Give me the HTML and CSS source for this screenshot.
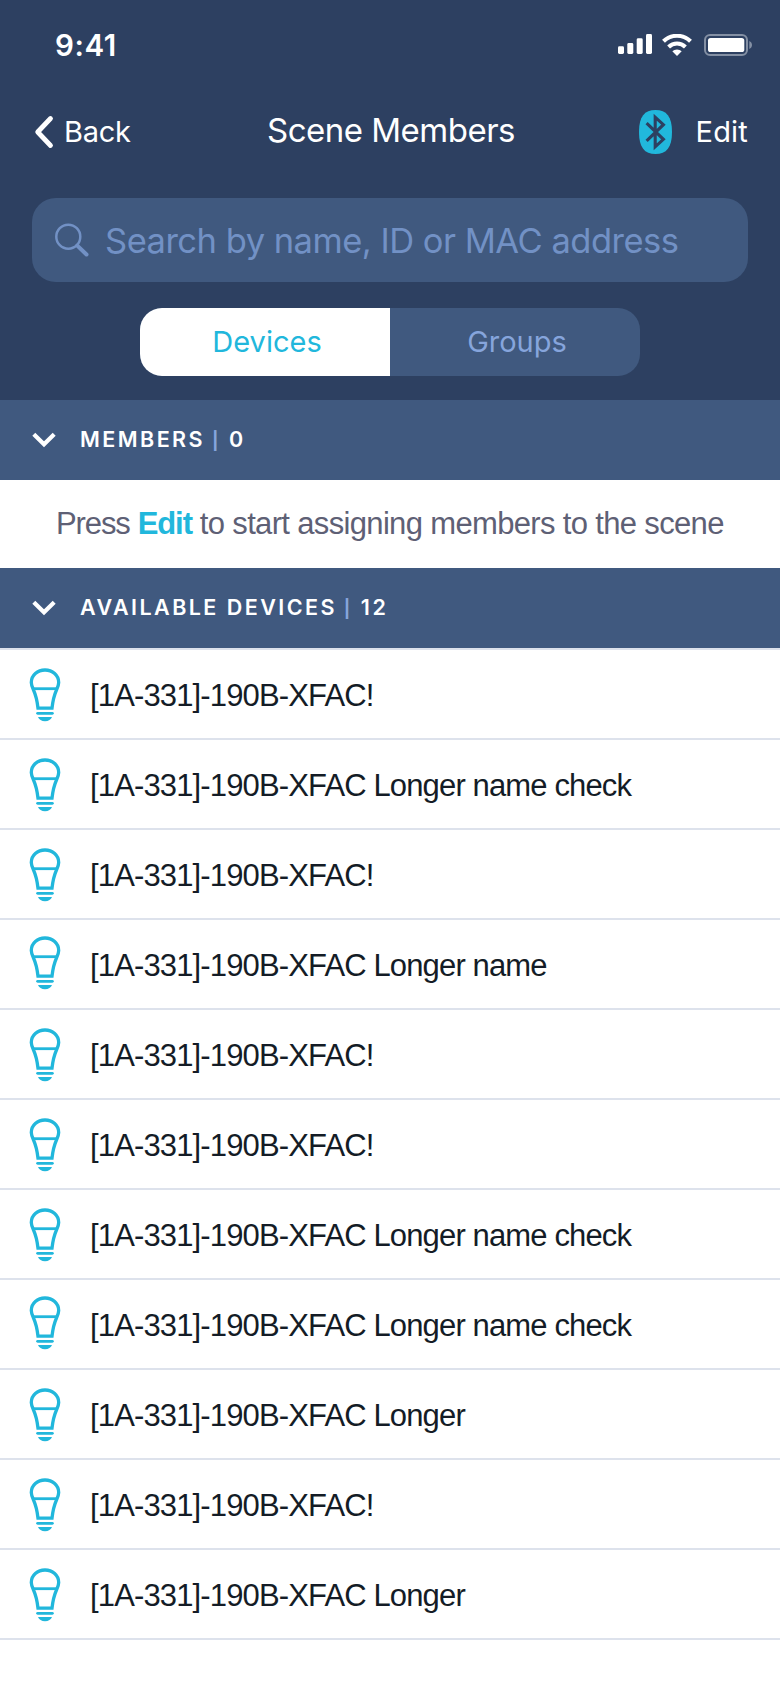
FILE: index.html
```html
<!DOCTYPE html>
<html lang="en">
<head>
<meta charset="utf-8">
<title>Scene Members</title>
<link rel="stylesheet" href="styles.css">
</head>
<body>
<svg class="defs" width="0" height="0" aria-hidden="true">
  <symbol id="bulb" viewBox="0 0 32 54">
    <path d="M9 40.200C8.200 33 7 27.500 4.500 22 3 18.800 2.300 17 2.300 14.400 2.300 7.300 8.500 2 16 2S29.700 7.300 29.700 14.400C29.700 17 29 18.800 27.500 22 25 27.500 23.800 33 23 40.200Z" fill="none" stroke="currentColor" stroke-width="3.300"/>
    <path d="M4 20.700H28" stroke="currentColor" stroke-width="2.800"/>
    <path d="M8.600 45.300H23.400" stroke="currentColor" stroke-width="2.800" stroke-linecap="round"/>
    <path d="M9 49H23C22 51.600 19.500 53.200 16 53.200S10 51.600 9 49Z" fill="currentColor"/>
  </symbol>
  <symbol id="down" viewBox="0 0 24 16">
    <path d="M1.800 2.300L12 12.300 22.200 2.300" fill="none" stroke="currentColor" stroke-width="4.200"/>
  </symbol>
</svg>
<header class="header">
  <div class="status">
    <span class="time">9:41</span>
    <span class="signals">
      <svg width="34" height="22" viewBox="0 0 34 22" fill="#fff"><rect x="0" y="12.300" width="6" height="7.700" rx="1.400"/><rect x="9.300" y="9" width="6" height="11" rx="1.400"/><rect x="18.700" y="4.300" width="6" height="15.700" rx="1.400"/><rect x="28" y="0" width="6" height="20" rx="1.400"/></svg>
      <svg width="30" height="22" viewBox="0 0 30 22"><g fill="none" stroke="#fff" stroke-width="4.100"><path d="M1.500 7.300A19.300 19.300 0 0 1 28.500 7.300"/><path d="M6.600 12.900A12.200 12.200 0 0 1 23.400 12.900"/></g><path d="M15 22L10.300 17.300A6.800 6.800 0 0 1 19.700 17.300Z" fill="#fff"/></svg>
      <svg width="48" height="22" viewBox="0 0 48 22"><rect x="1" y="1" width="42" height="20" rx="5" fill="none" stroke="#8490a4" stroke-width="2"/><rect x="4" y="4" width="36.300" height="14" rx="2.600" fill="#fff"/><path d="M45.300 7V15C46.900 14.300 48 12.800 48 11S46.900 7.700 45.300 7Z" fill="#8490a4"/></svg>
    </span>
  </div>
  <nav class="nav">
    <a class="back"><svg width="20" height="34" viewBox="0 0 20 34"><path d="M16.500 3.500L3.700 17 16.500 30.500" fill="none" stroke="#fff" stroke-width="4.800" stroke-linecap="round" stroke-linejoin="round"/></svg><span class="label">Back</span></a>
    <h1 class="title">Scene Members</h1>
    <div class="actions">
      <svg width="33" height="44" viewBox="0 0 33 44"><path d="M16.500 0C27.500 0 33 6.500 33 22S27.500 44 16.500 44 0 37.500 0 22 5.500 0 16.500 0Z" fill="#21b8dc"/><path d="M7.600 13.200L24.400 29.300 16.200 36.800V7.200L24.400 14.700 7.600 30.800" fill="none" stroke="#2d4061" stroke-width="3.100"/></svg>
      <a class="edit label">Edit</a>
    </div>
  </nav>
  <div class="search">
    <svg width="36" height="36" viewBox="0 0 36 36" fill="none" stroke="currentColor"><circle cx="14.300" cy="14.700" r="12" stroke-width="2.500"/><path d="M23.300 23.600L32.500 32.500" stroke-width="4" stroke-linecap="round"/></svg>
    <span>Search by name, ID or MAC address</span>
  </div>
  <div class="tabs"><span class="tab active">Devices</span><span class="tab">Groups</span></div>
</header>
<main>
  <h2 class="section"><svg width="24" height="16"><use href="#down"/></svg><span>MEMBERS</span><i class="sep">|</i><span>0</span></h2>
  <p class="hint"><span class="lead">Press</span> <b>Edit</b> to start assigning members to the scene</p>
  <h2 class="section"><svg width="24" height="16"><use href="#down"/></svg><span>AVAILABLE DEVICES</span><i class="sep">|</i><span>12</span></h2>
  <ul class="list">
    <li class="row"><svg class="bulb"><use href="#bulb"/></svg><span>[1A-331]-190B-XFAC!</span></li>
    <li class="row"><svg class="bulb"><use href="#bulb"/></svg><span>[1A-331]-190B-XFAC Longer name check</span></li>
    <li class="row"><svg class="bulb"><use href="#bulb"/></svg><span>[1A-331]-190B-XFAC!</span></li>
    <li class="row"><svg class="bulb raised"><use href="#bulb"/></svg><span>[1A-331]-190B-XFAC Longer name</span></li>
    <li class="row"><svg class="bulb"><use href="#bulb"/></svg><span>[1A-331]-190B-XFAC!</span></li>
    <li class="row"><svg class="bulb"><use href="#bulb"/></svg><span>[1A-331]-190B-XFAC!</span></li>
    <li class="row"><svg class="bulb"><use href="#bulb"/></svg><span>[1A-331]-190B-XFAC Longer name check</span></li>
    <li class="row"><svg class="bulb raised"><use href="#bulb"/></svg><span>[1A-331]-190B-XFAC Longer name check</span></li>
    <li class="row"><svg class="bulb"><use href="#bulb"/></svg><span>[1A-331]-190B-XFAC Longer</span></li>
    <li class="row"><svg class="bulb"><use href="#bulb"/></svg><span>[1A-331]-190B-XFAC!</span></li>
    <li class="row"><svg class="bulb"><use href="#bulb"/></svg><span>[1A-331]-190B-XFAC Longer</span></li>
  </ul>
</main>
</body>
</html>
```
FILE: styles.css
```css
* { box-sizing: border-box; margin: 0; padding: 0; }
html, body { background: #fff; }
body { width: 780px; height: 1688px; overflow: hidden; font-family: Inter, sans-serif; color: #fff; }
svg { display: block; flex: none; }
.defs { width: 0; height: 0; float: left; }

.header { height: 400px; background: #2d4061; }
.status { height: 90px; padding: 0 28px 0 55px; display: flex; align-items: center; justify-content: space-between; }
.time { font-size: 29.5px; font-weight: 600; letter-spacing: .6px; }
.signals { display: flex; gap: 10px; }
.signals svg:last-child { margin-left: 2px; }

.nav { height: 84px; padding: 0 32px 0 34px; display: grid; grid-template-columns: 1fr auto 1fr; align-items: center; font-size: 29px; }
.label { padding-bottom: 2px; }
.back { display: flex; align-items: center; gap: 10px; letter-spacing: -.25px; }
.title { font-size: 33px; font-weight: 400; letter-spacing: -.5px; padding-bottom: 4px; }
.actions { display: flex; align-items: center; justify-content: flex-end; gap: 24px; }
.edit { letter-spacing: .2px; }

.search { margin: 24px 32px 0; height: 84px; border-radius: 24px; padding-left: 22px; display: flex; align-items: center; gap: 15px; background: #40597f; color: #7291c5; font-size: 34.5px; letter-spacing: -.5px; white-space: nowrap; }
.tabs { width: 500px; height: 68px; margin: 26px auto 0; display: grid; grid-template-columns: 1fr 1fr; border-radius: 22px; overflow: hidden; background: #40597f; font-size: 29px; }
.tab { display: flex; align-items: center; justify-content: center; color: #86a5dc; padding: 0 0 2px 4px; }
.tab.active { background: #fff; color: #21b7dc; }

.section { height: 80px; padding: 0 32px; display: flex; align-items: center; background: #40597f; font-size: 21.5px; font-weight: 600; letter-spacing: 2.45px; }
.section span { padding-bottom: 2px; }
.section svg { margin-right: 24px; }
.sep { width: 6px; margin: 0 11px 0 7px; padding-top: 1px; color: #86a5dc; font-size: 17.5px; font-weight: 700; font-style: normal; letter-spacing: 0; }

.hint { height: 88px; line-height: 88px; padding-left: 56px; background: #fff; color: #5e6075; font-family: "Liberation Sans", Arial, sans-serif; font-size: 31px; letter-spacing: -.66px; white-space: nowrap; }
.lead { letter-spacing: -1.1px; }
.hint b { color: #21b7dc; letter-spacing: -1.1px; }

.list { list-style: none; border-top: 2px solid #dde2ec; }
.row { height: 90px; border-bottom: 2px solid #dde2ec; padding-left: 29px; display: flex; align-items: flex-start; gap: 29px; color: #141c26; font-family: "Liberation Sans", Arial, sans-serif; font-size: 31px; line-height: 92px; letter-spacing: -.86px; white-space: nowrap; }
.bulb { width: 32px; height: 54px; margin-top: 18px; color: #21b7dc; }
.bulb.raised { margin-top: 16px; }
```
